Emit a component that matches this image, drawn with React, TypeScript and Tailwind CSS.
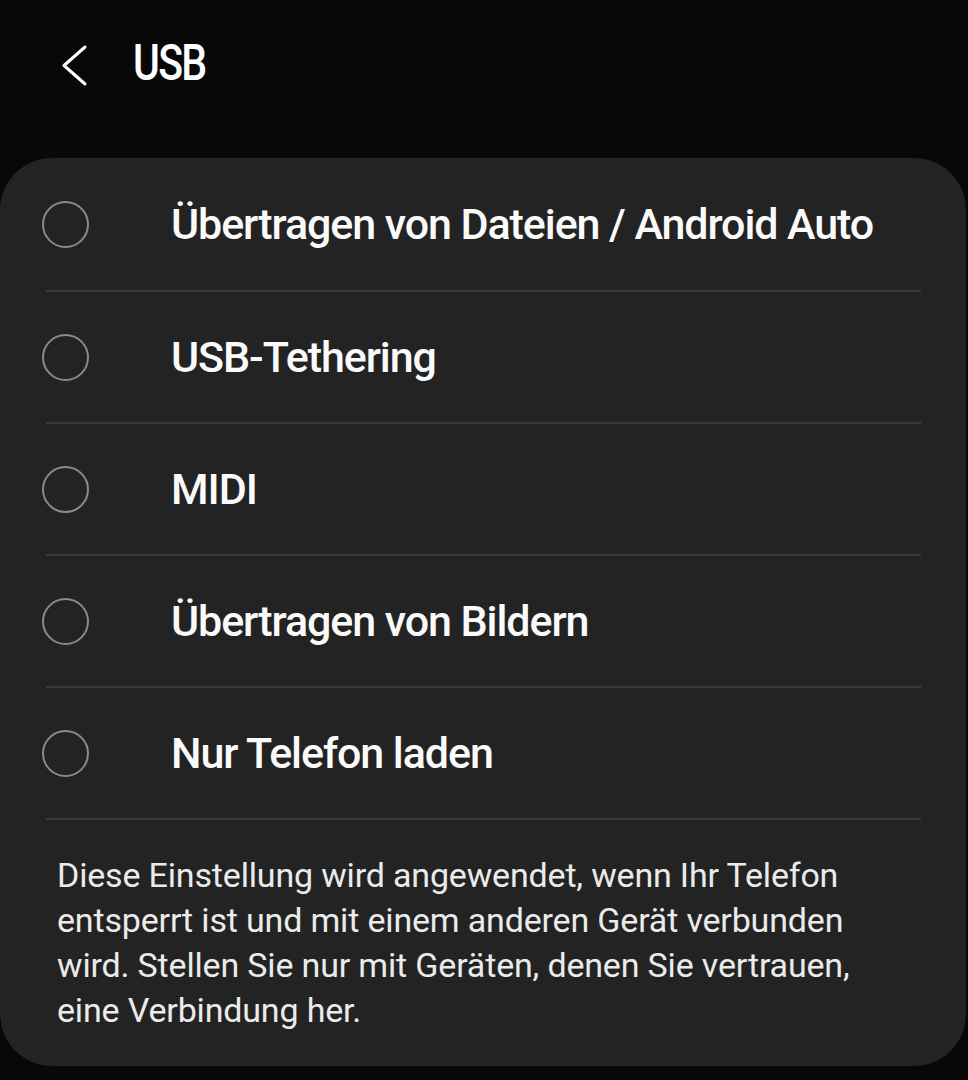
import React from "react";

const items = [
  "Übertragen von Dateien / Android Auto",
  "USB-Tethering",
  "MIDI",
  "Übertragen von Bildern",
  "Nur Telefon laden",
];

export default function App() {
  return (
    <div
      className="w-[968px] h-[1080px] bg-[#080808] flex flex-col overflow-hidden"
      style={{ fontFamily: "Roboto, 'Liberation Sans', sans-serif" }}
    >
      <div className="h-[158px] flex items-start pt-[38px] pl-[60px] shrink-0">
        <svg width="30" height="44" viewBox="0 0 30 44" className="mt-[6px]">
          <path d="M25 3 L4 21.5 L25 40" fill="none" stroke="#ffffff" strokeWidth="3" strokeLinecap="round" strokeLinejoin="round" />
        </svg>
        <div className="ml-[43px] text-white text-[50px] leading-[50px] font-medium tracking-[-0.04em] origin-left scale-x-[0.82]">
          USB
        </div>
      </div>
      <div className="mr-[2px] bg-[#232323] rounded-[52px] flex flex-col shrink-0">
        {items.map((t, i) => (
          <React.Fragment key={t}>
            {i > 0 && <div className="h-[2px] bg-[#3b3b3b] ml-[46px] mr-[45px]" />}
            <div className={`${i === 0 ? "h-[132px]" : "h-[130px]"} flex items-center`}>
              <div className="ml-[42px] w-[47px] h-[47px] rounded-full border-2 border-[#8a8a8a] shrink-0" />
              <div className="ml-[82px] text-[#fafafa] text-[43px] font-medium tracking-[-0.025em] whitespace-nowrap">
                {t}
              </div>
            </div>
          </React.Fragment>
        ))}
        <div className="h-[2px] bg-[#3b3b3b] ml-[46px] mr-[45px]" />
        <div className="pl-[57px] pr-[40px] pt-[33px] pb-[33px] text-[#ebebeb] text-[34px] leading-[45px] tracking-[-0.005em] whitespace-nowrap">
          Diese Einstellung wird angewendet, wenn Ihr Telefon
          <br />
          entsperrt ist und mit einem anderen Gerät verbunden
          <br />
          wird. Stellen Sie nur mit Geräten, denen Sie vertrauen,
          <br />
          eine Verbindung her.
        </div>
      </div>
    </div>
  );
}
